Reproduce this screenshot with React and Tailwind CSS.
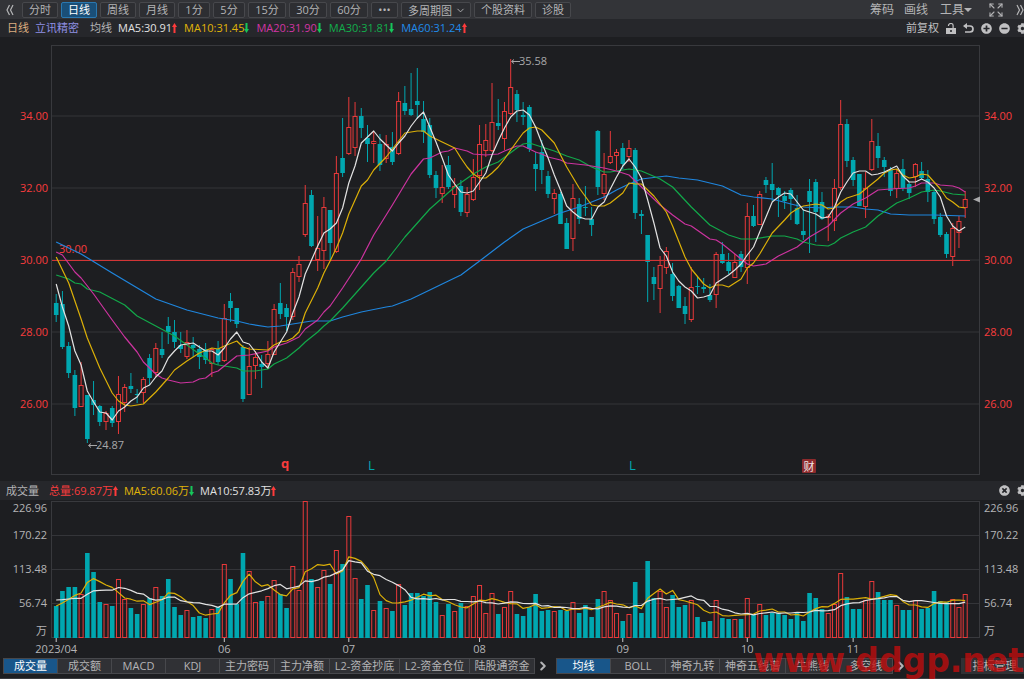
import React, { useState } from 'react';
import { Expand, ChevronDown, ChevronRight } from 'lucide-react';
import { FaPlusCircle, FaMinusCircle, FaTimesCircle, FaCog } from 'react-icons/fa';

const RED = '#e8393a';
const TEXT_RED = '#f83c3d';
const TEAL = '#00a7b0';
const GRID = '#343539';
const FONT = '"Open Sans", "Noto Sans CJK SC", sans-serif';

// Each day: [rising, high, body top, body bottom, low, volume top], in chart units
const DAYS = [
    [0, 294, 303, 315, 322, 606], [0, 291, 304, 347, 349, 591], [0, 342, 346, 373, 378, 587],
    [0, 370, 375, 408, 416, 587], [1, 362, 385, 407, 407, 594], [0, 395, 395, 439, 443, 553],
    [0, 381, 400, 405, 415, 572], [0, 405, 406, 422, 426, 602], [1, 411, 413, 422, 430, 604],
    [0, 406, 408, 423, 427, 606], [1, 376, 394, 422, 434, 579], [1, 384, 387, 403, 412, 599],
    [0, 373, 386, 389, 393, 608], [0, 389, 394, 395, 403, 614], [1, 377, 379, 393, 403, 604],
    [0, 354, 358, 378, 385, 598], [1, 343, 348, 373, 377, 587], [0, 332, 349, 355, 358, 596],
    [0, 317, 326, 332, 344, 579], [0, 320, 332, 342, 348, 607], [0, 332, 345, 349, 353, 615],
    [1, 330, 342, 357, 359, 610], [0, 337, 345, 348, 357, 617], [0, 345, 349, 357, 369, 616],
    [0, 343, 349, 360, 364, 618], [1, 348, 349, 364, 377, 609], [0, 341, 349, 362, 365, 607],
    [1, 304, 318, 361, 362, 564], [0, 293, 301, 308, 322, 579], [0, 308, 308, 324, 328, 604],
    [0, 345, 347, 399, 402, 553], [1, 347, 366, 395, 395, 571], [1, 351, 357, 366, 379, 602],
    [0, 355, 364, 367, 388, 601], [1, 341, 354, 364, 368, 596], [1, 304, 309, 355, 355, 580],
    [0, 283, 303, 314, 319, 594], [0, 304, 308, 317, 331, 608], [1, 268, 272, 317, 320, 566],
    [1, 256, 264, 277, 282, 590], [1, 185, 203, 235, 237, 501], [0, 190, 195, 246, 247, 579],
    [1, 216, 248, 260, 271, 587], [1, 197, 207, 251, 269, 570], [0, 210, 210, 243, 260, 584],
    [1, 156, 173, 252, 253, 550], [0, 118, 158, 173, 177, 564], [1, 97, 127, 154, 155, 516],
    [1, 102, 116, 148, 156, 578], [0, 108, 116, 128, 138, 599], [0, 125, 138, 144, 162, 585],
    [1, 132, 141, 144, 163, 610], [0, 134, 144, 165, 171, 601], [1, 135, 144, 159, 163, 608],
    [0, 132, 147, 162, 165, 611], [1, 92, 101, 154, 155, 584], [0, 86, 103, 111, 115, 605],
    [0, 73, 109, 115, 116, 593], [0, 68, 101, 105, 119, 593], [0, 101, 119, 132, 143, 596],
    [0, 118, 125, 175, 178, 592], [0, 171, 175, 188, 198, 602], [1, 165, 187, 194, 203, 615],
    [0, 156, 165, 187, 189, 604], [1, 178, 186, 195, 208, 611], [0, 180, 186, 212, 216, 603],
    [1, 187, 194, 213, 217, 606], [1, 159, 177, 200, 201, 596], [1, 125, 144, 176, 190, 585],
    [1, 124, 140, 151, 157, 613], [1, 83, 122, 151, 152, 593], [0, 99, 123, 126, 130, 614],
    [1, 102, 111, 139, 150, 607], [1, 59, 87, 114, 115, 591], [0, 90, 94, 110, 122, 614],
    [0, 102, 115, 117, 125, 616], [0, 105, 107, 149, 152, 607], [0, 152, 164, 169, 191, 594],
    [0, 140, 152, 170, 184, 611], [0, 171, 176, 194, 198, 610], [1, 189, 193, 199, 214, 611],
    [0, 192, 194, 224, 224, 610], [0, 218, 223, 249, 249, 611], [1, 184, 198, 239, 251, 602],
    [0, 198, 204, 219, 224, 613], [0, 186, 207, 208, 216, 605], [0, 207, 219, 225, 236, 617],
    [0, 130, 131, 187, 195, 599], [1, 153, 174, 194, 200, 591], [1, 131, 156, 163, 164, 600],
    [1, 149, 152, 156, 170, 613], [0, 143, 148, 164, 169, 621], [1, 140, 148, 157, 162, 614],
    [0, 148, 150, 213, 219, 582], [0, 210, 214, 216, 234, 613], [0, 235, 235, 262, 302, 561],
    [0, 267, 277, 284, 300, 598], [1, 256, 265, 289, 313, 591], [1, 247, 251, 268, 274, 607],
    [0, 263, 274, 296, 301, 595], [0, 285, 286, 308, 308, 607], [0, 297, 306, 314, 324, 605],
    [1, 267, 287, 320, 322, 600], [0, 277, 286, 287, 294, 617], [0, 278, 287, 289, 293, 622],
    [0, 284, 295, 300, 302, 621], [1, 252, 254, 295, 308, 600], [0, 242, 254, 263, 264, 618],
    [0, 253, 262, 271, 274, 619], [1, 254, 262, 278, 278, 619], [0, 251, 254, 267, 272, 619],
    [1, 203, 216, 268, 284, 598], [0, 205, 216, 226, 227, 615], [1, 191, 194, 225, 225, 604],
    [0, 177, 180, 185, 193, 615], [0, 163, 184, 190, 201, 613], [0, 187, 188, 195, 217, 613],
    [0, 191, 196, 201, 209, 615], [0, 188, 190, 199, 220, 619], [0, 195, 208, 224, 225, 612],
    [0, 209, 231, 235, 240, 621], [0, 179, 191, 202, 253, 593], [0, 179, 182, 212, 242, 598],
    [0, 192, 202, 219, 220, 609], [1, 214, 216, 218, 241, 613], [1, 179, 188, 221, 231, 604],
    [1, 100, 124, 188, 190, 573], [0, 119, 124, 161, 167, 597], [0, 157, 160, 180, 186, 609],
    [0, 174, 174, 206, 206, 609], [1, 172, 188, 207, 218, 600], [1, 119, 141, 170, 171, 581],
    [0, 133, 146, 158, 168, 592], [0, 157, 160, 167, 177, 600], [0, 167, 170, 191, 196, 600],
    [1, 169, 173, 189, 198, 605], [0, 159, 169, 188, 191, 610], [0, 182, 184, 193, 199, 610],
    [1, 163, 164, 177, 187, 600], [0, 162, 171, 178, 180, 609], [0, 170, 179, 192, 202, 608],
    [0, 190, 192, 219, 224, 591], [0, 213, 217, 235, 237, 601], [0, 232, 234, 254, 258, 602],
    [1, 223, 228, 257, 266, 599], [1, 216, 221, 233, 248, 607], [1, 191, 199, 208, 218, 594],
];

const MA5 = [
    284, 307, 326, 351, 365, 391, 402, 412, 413, 420, 411, 407, 401, 397, 388, 385, 377, 371, 358, 351,
    345, 344, 343, 347, 351, 351, 355, 348, 339, 332, 342, 344, 352, 362, 368, 352, 342, 332, 313, 297,
    274, 260, 246, 233, 229, 223, 208, 183, 166, 143, 137, 131, 139, 145, 151, 143, 136, 126, 118, 112,
    127, 142, 158, 175, 184, 192, 193, 191, 182, 173, 155, 141, 128, 117, 111, 110, 115, 127, 143, 158,
    175, 190, 206, 212, 217, 219, 219, 207, 202, 189, 177, 166, 159, 167, 178, 200, 223, 248, 256, 272,
    281, 287, 291, 298, 297, 295, 283, 279, 275, 270, 264, 255, 247, 232, 217, 202, 197, 193, 194, 202,
    210, 212, 214, 218, 217, 207, 192, 182, 173, 171, 171, 175, 174, 172, 169, 166, 176, 182, 182, 179,
    182, 188, 197, 216, 226, 231, 227,
];

// Slower averages only keep their turning points: [day, y]
const MA10 = [
    [0, 257], [2, 283], [4, 319], [5, 338], [7, 368], [9, 393], [10, 401], [11, 405], [12, 406], [14, 404],
    [16, 392], [18, 378], [19, 370], [21, 361], [23, 353], [25, 348], [26, 349], [27, 346], [29, 341],
    [30, 347], [31, 349], [34, 350], [35, 345], [36, 342], [37, 341], [38, 338], [39, 332], [40, 313],
    [42, 288], [43, 273], [44, 261], [45, 248], [46, 233], [47, 214], [49, 186], [50, 180], [51, 170],
    [53, 157], [55, 141], [56, 133], [58, 131], [59, 131], [60, 136], [62, 142], [64, 148], [65, 158],
    [66, 167], [67, 174], [68, 178], [69, 178], [70, 173], [71, 167], [72, 159], [73, 150], [75, 133],
    [76, 128], [77, 127], [78, 130], [80, 143], [82, 167], [84, 188], [86, 205], [87, 206], [88, 206],
    [89, 203], [91, 193], [92, 183], [93, 184], [94, 184], [95, 190], [96, 196], [98, 212], [99, 226],
    [101, 257], [102, 269], [104, 284], [105, 288], [106, 285], [107, 285], [108, 287], [109, 283],
    [110, 279], [111, 268], [112, 263], [113, 254], [115, 233], [117, 220], [118, 213], [119, 209],
    [120, 206], [122, 204], [123, 205], [124, 209], [125, 208], [126, 202], [127, 198], [129, 194],
    [130, 189], [132, 179], [133, 173], [134, 170], [135, 169], [136, 175], [137, 178], [138, 177],
    [139, 174], [140, 175], [141, 182], [142, 189], [143, 198], [144, 202], [145, 207], [146, 208],
];

const MA20 = [
    [0, 252], [1, 255], [3, 272], [4, 278], [6, 294], [9, 320], [11, 337], [13, 352], [14, 362], [16, 374],
    [17, 378], [18, 380], [20, 383], [22, 382], [23, 379], [24, 378], [25, 373], [26, 371], [29, 356],
    [31, 355], [34, 351], [35, 347], [37, 343], [39, 337], [40, 329], [42, 320], [43, 312], [44, 306],
    [46, 288], [48, 269], [49, 259], [51, 235], [54, 205], [57, 174], [59, 159], [60, 158], [62, 152],
    [63, 151], [64, 148], [66, 151], [67, 154], [69, 155], [71, 154], [72, 151], [74, 146], [75, 146],
    [77, 152], [78, 154], [79, 157], [81, 160], [82, 163], [85, 165], [88, 168], [90, 171], [92, 175],
    [93, 181], [95, 193], [97, 205], [99, 215], [101, 224], [102, 226], [105, 239], [106, 240], [107, 244],
    [110, 259], [111, 264], [112, 266], [114, 264], [116, 256], [119, 247], [121, 237], [124, 226],
    [126, 213], [128, 204], [130, 198], [132, 190], [134, 189], [137, 188], [138, 186], [139, 183],
    [141, 183], [142, 185], [144, 186], [145, 188], [146, 192],
];

const MA30 = [
    [0, 275], [2, 279], [3, 283], [4, 284], [5, 289], [7, 292], [11, 305], [13, 316], [16, 326], [19, 336],
    [21, 345], [23, 354], [24, 358], [25, 363], [26, 365], [29, 368], [30, 371], [32, 371], [34, 369],
    [35, 364], [37, 358], [39, 348], [40, 342], [42, 332], [43, 326], [44, 321], [46, 308], [49, 287],
    [51, 273], [53, 261], [54, 253], [56, 237], [60, 209], [64, 187], [67, 174], [69, 167], [71, 162],
    [74, 148], [75, 144], [76, 143], [77, 145], [80, 151], [82, 156], [84, 160], [86, 167], [88, 172],
    [89, 172], [92, 169], [94, 171], [97, 179], [99, 187], [102, 207], [105, 225], [108, 235], [110, 239],
    [112, 239], [115, 236], [117, 236], [119, 239], [120, 242], [122, 245], [124, 246], [125, 243],
    [126, 238], [128, 232], [130, 227], [132, 216], [135, 203], [137, 198], [139, 192], [141, 190],
    [142, 191], [144, 194], [146, 195],
];

const MA60 = [
    [0, 242], [4, 254], [9, 273], [16, 299], [21, 310], [26, 318], [29, 321], [31, 324], [34, 327],
    [36, 326], [39, 323], [41, 321], [44, 321], [46, 317], [49, 312], [53, 307], [54, 306], [57, 299],
    [60, 290], [63, 281], [65, 275], [68, 261], [72, 242], [75, 229], [78, 221], [81, 213], [84, 207],
    [88, 197], [90, 190], [92, 184], [94, 179], [98, 176], [100, 178], [103, 180], [107, 186], [110, 195],
    [112, 197], [115, 199], [118, 204], [120, 207], [123, 208], [125, 207], [128, 207], [130, 209],
    [132, 210], [134, 214], [137, 215], [141, 215], [146, 216],
];

// Volumes of the nine days before the first one shown, needed by the averages
const EARLIER = [594, 594, 594, 594, 594, 606, 606, 606, 606];

const dayX = (i) => 56.2 + i * 6.226;
const toPoints = (pairs) => pairs.map(([i, y]) => `${dayX(i).toFixed(1)},${y}`).join(' ');

const averageVolume = (days) => {
    const tops = [...EARLIER, ...DAYS.map((d) => d[5])];
    return DAYS.map((_, i) => {
        const part = tops.slice(i + 10 - days, i + 10);
        return [i, part.reduce((a, b) => a + b, 0) / days];
    });
};

const Line = ({ pairs, color }) => (
    <polyline points={toPoints(pairs)} fill="none" stroke={color} strokeWidth="1.2" strokeLinejoin="round" />
);

const Bar = ({ x, up, top, bottom }) =>
    up ? (
        <rect x={x - 2} y={top + 0.5} width="4" height={Math.max(bottom - top - 1, 1)} fill="none" stroke={RED} />
    ) : (
        <rect x={x - 2.3} y={top} width="4.6" height={Math.max(bottom - top, 1)} fill={TEAL} />
    );

const Trend = ({ up }) => (
    <svg className={`w-[5px] h-[10px] shrink-0 ${up ? 'text-[#ff3b3b]' : 'text-[#16c65a]'}`} viewBox="0 0 5 10" fill="currentColor">
        {up ? <path d="M2.500 0L5 4H3.500v6h-2V4H0z" /> : <path d="M2.500 10L0 6h1.500V0h2v6H5z" />}
    </svg>
);

const Chevrons = ({ right }) => (
    <svg className="w-2 h-3" viewBox="0 0 8 12" fill="none" stroke="currentColor" strokeWidth="1.2">
        {right ? <path d="M1 1l2.500 5L1 11M4.500 1L7 6l-2.500 5" /> : <path d="M3.500 1L1 6l2.500 5M7 1L4.500 6 7 11" />}
    </svg>
);

const LockIcon = () => (
    <svg className="w-[10px] h-[11px]" viewBox="0 0 10 11">
        <path d="M2.500 3V2.500a2.300 2 0 0 1 4.600 0V5" fill="none" stroke="currentColor" strokeWidth="1.2" />
        <path d="M0 5h10v6H0zM4.200 7v2h1.600V7z" fill="currentColor" fillRule="evenodd" />
    </svg>
);

const UndoIcon = () => (
    <svg className="w-[11px] h-[11px]" viewBox="0 0 11 11">
        <path d="M2.500 3H7a3 3 0 0 1 0 6H2" fill="none" stroke="currentColor" strokeWidth="1.7" />
        <path d="M0 3l4-3v6z" fill="currentColor" />
    </svg>
);

const PriceChart = () => (
    <svg className="block w-full h-auto" viewBox="0 37 1024 444" fontFamily={FONT} fontSize="11" role="img" aria-label="日线">
        <g stroke={GRID}>
            {[116, 188, 260, 332, 404].map((y) => (
                <line key={y} x1="52" x2="980" y1={y} y2={y} />
            ))}
            <rect x="51.500" y="45.500" width="928" height="429" fill="none" stroke="#38393d" />
        </g>

        {[34, 32, 30, 28, 26].map((price, i) => (
            <g key={price} fill={TEXT_RED}>
                <text x="48" y={120 + i * 72} textAnchor="end">{price.toFixed(2)}</text>
                <text x="984" y={120 + i * 72}>{price.toFixed(2)}</text>
            </g>
        ))}

        {DAYS.map(([up, high, top, bottom, low], i) => {
            const x = dayX(i);
            return (
                <g key={i} stroke={up ? RED : TEAL} strokeWidth="1">
                    <line x1={x} x2={x} y1={high} y2={top} />
                    <line x1={x} x2={x} y1={bottom} y2={low} />
                    <g stroke="none">
                        <Bar x={x} up={up} top={top} bottom={bottom} />
                    </g>
                </g>
            );
        })}

        <line x1="52" x2="970" y1="260.500" y2="260.500" stroke="#d23536" />
        <text x="59" y="253" fill={TEXT_RED}>30.00</text>

        <Line pairs={MA60} color="#1f86de" />
        <Line pairs={MA30} color="#12a94a" />
        <Line pairs={MA20} color="#cc339f" />
        <Line pairs={MA10} color="#dcb008" />
        <Line pairs={MA5.map((y, i) => [i, y])} color="#e2e2e2" />

        <g stroke="#a8a8aa" fill="none">
            <path d="M520 61.500h-8M514 59.500l-2.500 2 2.500 2M97 445.500h-8M91 443.500l-2.500 2 2.500 2" />
        </g>
        <g fill="#a8a8aa">
            <text x="519" y="65">35.58</text>
            <text x="96" y="449">24.87</text>
            <path d="M973 199.500l7-3v6z" />
        </g>

        <text x="281" y="468" fill={TEXT_RED} fontSize="13" fontWeight="700">q</text>
        <g fontSize="13" fill={TEAL}>
            <text x="368" y="470">L</text>
            <text x="629" y="470">L</text>
        </g>
        <rect x="802" y="459" width="14" height="14" rx="1" fill="#8d2a2c" />
        <text x="809" y="471" textAnchor="middle" fill="#f0e6e6">财</text>
    </svg>
);

const MONTHS = [[0, '2023/04'], [27, '06'], [47, '07'], [68, '08'], [91, '09'], [111, '10'], [128, '11']];
const VOLUME_TICKS = [['226.96', 512], ['170.22', 539], ['113.48', 573], ['56.74', 607], ['万', 635]];

const VolumeChart = () => (
    <svg className="block w-full h-auto" viewBox="0 500 1024 158" fontFamily={FONT} fontSize="11" role="img" aria-label="成交量">
        <g stroke={GRID}>
            {[535.5, 569.5, 603.5].map((y) => (
                <line key={y} x1="52" x2="980" y1={y} y2={y} />
            ))}
            <rect x="51.500" y="501.500" width="928" height="136" fill="none" stroke="#38393d" />
        </g>

        <g fill="#b4b4b6">
            {VOLUME_TICKS.map(([label, y]) => (
                <g key={label}>
                    <text x="47" y={y} textAnchor="end">{label}</text>
                    <text x="984" y={y}>{label}</text>
                </g>
            ))}
        </g>

        {DAYS.map((d, i) => (
            <Bar key={i} x={dayX(i)} up={d[0]} top={d[5]} bottom={638} />
        ))}
        <Line pairs={averageVolume(5)} color="#dcb008" />
        <Line pairs={averageVolume(10)} color="#e2e2e2" />

        {MONTHS.map(([day, label]) => (
            <g key={label}>
                <line x1={dayX(day)} x2={dayX(day)} y1="638" y2="642" stroke="#c8c8ca" />
                <text x={dayX(day)} y="653" textAnchor="middle" fill="#b4b4b6">{label}</text>
            </g>
        ))}
    </svg>
);

const PERIODS = [
    ['分时', 'w-9'], ['日线', 'w-9'], ['周线', 'w-9'], ['月线', 'w-9'], ['1分', 'w-8'], ['5分', 'w-8'],
    ['15分', 'w-[38px]'], ['30分', 'w-[38px]'], ['60分', 'w-[38px]'], ['•••', 'w-[27px]'],
];

const LEGEND = [
    ['MA5:30.91', 'text-[#e2e2e2]', true],
    ['MA10:31.45', 'text-[#e0b508]', false],
    ['MA20:31.90', 'text-[#d235a4]', false],
    ['MA30:31.81', 'text-[#12ae4c]', false],
    ['MA60:31.24', 'text-[#218bea]', true],
];

const LEFT_TABS = [
    ['成交量', 'w-[54px]'], ['成交额', 'w-[54px]'], ['MACD', 'w-[54px]'], ['KDJ', 'w-[54px]'],
    ['主力密码', 'w-[55px]'], ['主力净额', 'w-[55px]'], ['L2-资金抄底', 'w-[70px]'],
    ['L2-资金仓位', 'w-[70px]'], ['陆股通资金', 'w-[66px]'],
];

const RIGHT_TABS = [
    ['均线', 'w-[54px]'], ['BOLL', 'w-[55px]'], ['神奇九转', 'w-[54px]'], ['神奇五线谱', 'w-[66px]'],
    ['牛熊线', 'w-[54px]'], ['多空线', 'w-[54px]'],
];

const toolButton = 'h-4 shrink-0 rounded-xs border flex items-center justify-center whitespace-nowrap';
const idleButton = 'border-[#47484c] bg-[#2d2e32]';
const activeButton = 'border-[#2a78b0] bg-[#1a4f78] text-white';

const Tabs = ({ tabs, active, onSelect }) => (
    <div className="flex shrink-0">
        {tabs.map(([label, width]) => (
            <button
                key={label}
                onClick={() => onSelect(label)}
                className={`h-4 ${width} shrink-0 border-l border-y border-[#47484c] last:border-r flex items-center justify-center whitespace-nowrap ${label === active ? 'bg-[#18568a] text-white' : 'bg-[#303135]'
                    }`}
            >
                {label}
            </button>
        ))}
    </div>
);

const App = () => {
    const [period, setPeriod] = useState('日线');
    const [volumeTab, setVolumeTab] = useState('成交量');
    const [priceTab, setPriceTab] = useState('均线');

    return (
        <div className="relative w-full min-h-screen overflow-hidden bg-[#1d1e21] text-[11px] leading-4 text-[#b4b4b6] font-['Open_Sans','Noto_Sans_CJK_SC',sans-serif]">
            <div className="h-[19px] bg-[#333438] flex items-center justify-between overflow-hidden">
                <div className="flex items-center gap-[3px] pl-[6px]">
                    <button aria-label="收起" className="w-[13px] shrink-0"><Chevrons /></button>
                    {PERIODS.map(([label, width]) => (
                        <button
                            key={label}
                            onClick={() => setPeriod(label)}
                            className={`${toolButton} ${width} ${label === period ? activeButton : idleButton}`}
                        >
                            {label}
                        </button>
                    ))}
                    <div className="relative shrink-0">
                        <select aria-label="多周期图" className={`${toolButton} ${idleButton} w-[70px] pl-[6px] appearance-none`}>
                            <option>多周期图</option>
                        </select>
                        <ChevronDown className="absolute right-[5px] top-[3px] size-[11px] pointer-events-none" />
                    </div>
                    <button className={`${toolButton} ${idleButton} w-[58px]`}>个股资料</button>
                    <button className={`${toolButton} ${idleButton} w-9`}>诊股</button>
                </div>
                <div className="flex items-center text-xs shrink-0">
                    <button className="mr-[10px]">筹码</button>
                    <button className="mr-3">画线</button>
                    <button className="flex items-center mr-4">
                        工具
                        <svg className="w-2 h-1" viewBox="0 0 8 4" fill="currentColor"><path d="M0 0h8L4 4z" /></svg>
                    </button>
                    <button aria-label="全屏" className="mr-3"><Expand className="size-4" strokeWidth={1.6} /></button>
                    <button aria-label="展开"><Chevrons right /></button>
                </div>
            </div>

            <div className="h-[18px] bg-[#26272b] flex items-center justify-between pl-[7px] overflow-hidden whitespace-nowrap">
                <div className="flex items-center">
                    <span className="mr-[6px] text-[#dcae80]">日线</span>
                    <span className="mr-[11px] text-[#8f90e4]">立讯精密</span>
                    <span className="mr-[6px]">均线</span>
                    {LEGEND.map(([label, color, up]) => (
                        <span key={label} className={`flex items-center mr-[7px] ${color}`}>
                            {label}
                            <Trend up={up} />
                        </span>
                    ))}
                </div>
                <div className="flex items-center gap-[7px] -mr-1 shrink-0 text-[#c0c0c2]">
                    <button>前复权</button>
                    <button aria-label="锁定"><LockIcon /></button>
                    <button aria-label="撤销"><UndoIcon /></button>
                    <button aria-label="放大"><FaPlusCircle className="size-[11px]" /></button>
                    <button aria-label="缩小"><FaMinusCircle className="size-[11px]" /></button>
                    <button aria-label="设置"><FaCog className="size-[11px]" /></button>
                </div>
            </div>

            <PriceChart />

            <div className="h-[19px] bg-[#26272b] flex items-center justify-between pl-[6px] overflow-hidden whitespace-nowrap">
                <div className="flex items-center">
                    <span className="mr-[10px]">成交量</span>
                    <span className="flex items-center mr-[6px] text-[#f83c3d]">总量:69.87万<Trend up /></span>
                    <span className="flex items-center mr-[6px] text-[#e0b508]">MA5:60.06万<Trend /></span>
                    <span className="flex items-center text-[#e2e2e2]">MA10:57.83万<Trend up /></span>
                </div>
                <div className="flex items-center gap-[7px] -mr-1 text-[#c0c0c2]">
                    <button aria-label="关闭"><FaTimesCircle className="size-[11px]" /></button>
                    <button aria-label="设置"><FaCog className="size-[11px]" /></button>
                </div>
            </div>

            <VolumeChart />

            <div className="h-[21px] pl-[3px] border-b border-[#3a3b3f] flex items-start">
                <Tabs tabs={LEFT_TABS} active={volumeTab} onSelect={setVolumeTab} />
                <button aria-label="更多指标" className="w-[21px] h-4 shrink-0 flex items-center justify-center pr-[5px]">
                    <ChevronRight className="size-[14px]" strokeWidth={3.5} />
                </button>
                <Tabs tabs={RIGHT_TABS} active={priceTab} onSelect={setPriceTab} />
                <button aria-label="更多均线" className="w-4 h-4 shrink-0 flex items-center justify-center">
                    <ChevronRight className="size-[14px]" strokeWidth={3.5} />
                </button>
                <button className="ml-auto w-[63px] h-4 pl-1 shrink-0 bg-[#303135] whitespace-nowrap">指标管理</button>
            </div>

            <div className="absolute bottom-0 right-0 h-[37px] text-[33px] leading-[37px] font-bold font-['DejaVu_Sans',sans-serif] text-[#c80c0c]/75 whitespace-nowrap pointer-events-none">
                www.ddgp.net
            </div>
        </div>
    );
};

export default App;
